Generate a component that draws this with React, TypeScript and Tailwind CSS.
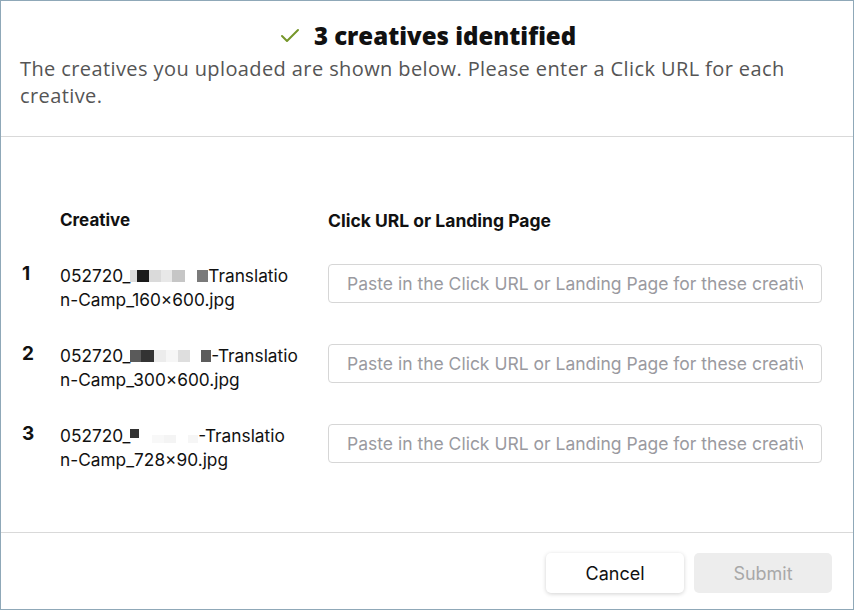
import { Check } from "lucide-react";

type Block = { w: number; c: string; h?: number; dy?: number };

const rows: { n: number; blocks: Block[]; tail: string; line2: string }[] = [
  {
    n: 1,
    blocks: [
      { w: 7, c: "#dcdcdc" },
      { w: 12, c: "#1a1a1a" },
      { w: 12, c: "#dadada" },
      { w: 11, c: "#e8e8e8" },
      { w: 13, c: "#c6c6c6" },
      { w: 12, c: "transparent" },
      { w: 11, c: "#7a7a7a" },
    ],
    tail: "Translatio",
    line2: "n-Camp_160×600.jpg",
  },
  {
    n: 2,
    blocks: [
      { w: 11, c: "#5a5a5a" },
      { w: 13, c: "#333333" },
      { w: 12, c: "#ececec" },
      { w: 12, c: "#f6f6f6" },
      { w: 12, c: "#dedede" },
      { w: 11, c: "transparent" },
      { w: 10, c: "#5c5c5c" },
    ],
    tail: "-Translatio",
    line2: "n-Camp_300×600.jpg",
  },
  {
    n: 3,
    blocks: [
      { w: 9, c: "#333333", h: 9, dy: -3 },
      { w: 13, c: "transparent" },
      { w: 12, c: "#f8f8f8", h: 8, dy: 3 },
      { w: 12, c: "#f4f4f4", h: 8, dy: 3 },
      { w: 12, c: "transparent" },
      { w: 10, c: "#f6f6f6", h: 8, dy: 3 },
    ],
    tail: "-Translatio",
    line2: "n-Camp_728×90.jpg",
  },
];

export default function App() {
  return (
    <div
      className="w-[854px] h-[610px] bg-white border border-[#8fa8b8] flex flex-col text-[#111]"
      style={{ fontFamily: "Inter, 'Liberation Sans', sans-serif" }}
    >
      {/* Header */}
      <div className="px-[19px] pt-[18px] pb-[27px] border-b border-[#d9d9d9]">
        <div className="flex items-center justify-center gap-[12px] h-[33px]">
          <Check className="w-[24px] h-[24px] text-[#76962a]" strokeWidth={2} />
          <h1
            className="text-[24px] font-extrabold"
            style={{ fontFamily: "'Open Sans', 'Liberation Sans', sans-serif" }}
          >
            3 creatives identified
          </h1>
        </div>
        <p
          className="mt-[3px] text-[20px] leading-[27px] tracking-[0.4px] text-[#555]"
          style={{ fontFamily: "'Open Sans', 'Liberation Sans', sans-serif" }}
        >
          The creatives you uploaded are shown below. Please enter a Click URL for each creative.
        </p>
      </div>

      {/* Table */}
      <div className="flex-1 pl-[21px] pr-[31px] pt-[71px] border-b border-[#d9d9d9]">
        <div className="grid grid-cols-[38px_268px_1fr] items-center">
          <div />
          <div className="text-[17px] font-bold">Creative</div>
          <div className="text-[17.5px] font-bold">Click URL or Landing Page</div>
        </div>
        <div className="mt-[30px] flex flex-col gap-[32px]">
          {rows.map((r) => (
            <div key={r.n} className="grid grid-cols-[38px_268px_1fr] items-start">
              <div className="text-[19px] leading-[24px] font-bold -mt-[2px]">{r.n}</div>
              <div className="text-[17.3px] leading-[24px] whitespace-nowrap">
                <div className="flex items-center">
                  <span>052720_</span>
                  {r.blocks.map((b, i) => (
                    <span
                      key={i}
                      className="inline-block"
                      style={{
                        width: b.w,
                        height: b.h ?? 12,
                        background: b.c,
                        transform: `translateY(${b.dy ?? 0}px)`,
                      }}
                    />
                  ))}
                  <span>{r.tail}</span>
                </div>
                <div>{r.line2}</div>
              </div>
              <input
                className="h-[39px] w-full rounded-[4px] border border-[#d6d6d6] px-[18px] text-[17.5px] placeholder:text-[#9a9aa0] outline-none"
                placeholder="Paste in the Click URL or Landing Page for these creatives"
              />
            </div>
          ))}
        </div>
      </div>

      {/* Footer */}
      <div className="flex justify-end gap-[10px] pt-[20px] pb-[16px] pr-[21px]">
        <button className="w-[138px] h-[40px] rounded-[5px] bg-white shadow-[0_1px_4px_rgba(0,0,0,0.18)] text-[18px] text-[#111]">
          Cancel
        </button>
        <button className="w-[138px] h-[40px] rounded-[5px] bg-[#ededed] text-[18px] text-[#a8a8a8]">
          Submit
        </button>
      </div>
    </div>
  );
}
